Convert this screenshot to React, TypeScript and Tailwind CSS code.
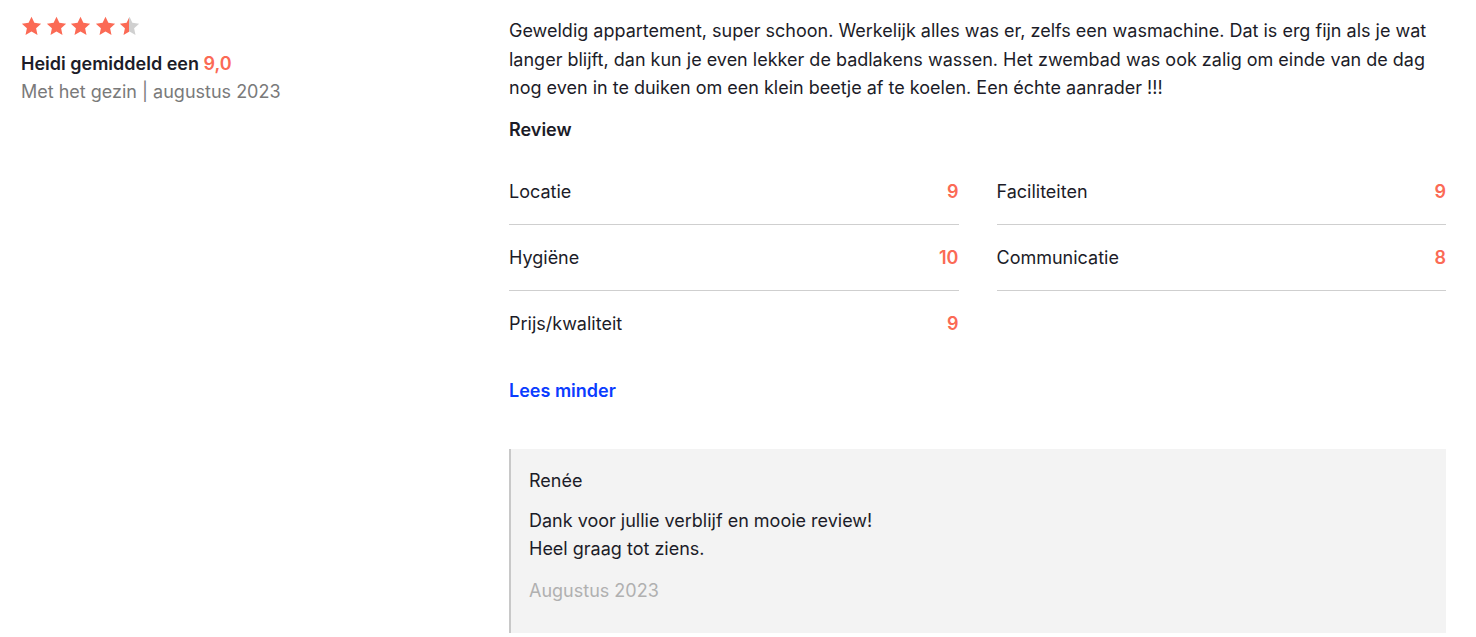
import React from 'react';

const SCORES = [
  { label: 'Locatie', value: 9 },
  { label: 'Faciliteiten', value: 9 },
  { label: 'Hygiëne', value: 10 },
  { label: 'Communicatie', value: 8 },
  { label: 'Prijs/kwaliteit', value: 9 },
];

const Star: React.FC<{ fill: number }> = ({ fill }) => {
  const id = `half-${fill}`;
  return (
    <svg className="w-[21px] h-[20px]" viewBox="0 0 24 23">
      <defs>
        <linearGradient id={id}>
          <stop offset={`${fill * 100}%`} stopColor="#fb6a55" />
          <stop offset={`${fill * 100}%`} stopColor="#d0d0d0" />
        </linearGradient>
      </defs>
      <path
        d="M12 0.8l3.3 7.1 7.8 0.9-5.8 5.3 1.6 7.7L12 17.9l-6.9 3.9 1.6-7.7L0.9 8.8l7.8-0.9z"
        fill={`url(#${id})`}
      />
    </svg>
  );
};

export default function App() {
  return (
    <div className="min-h-screen bg-white text-[#1c1c28] font-['Inter','Noto_Sans',sans-serif]">
      <div className="flex pl-[21px] pr-[30px] pt-[16px]">
        <div className="w-[488px] shrink-0">
          <div className="flex gap-[3.5px]">
            {[1, 1, 1, 1, 0.5].map((f, i) => (
              <Star key={i} fill={f} />
            ))}
          </div>
          <div className="mt-[16px] text-[18px] leading-[24px] font-semibold">
            Heidi gemiddeld een <span className="text-[#fb6a55]">9,0</span>
          </div>
          <div className="mt-[4px] text-[18px] leading-[24px] text-[#7a7a7a]">
            Met het gezin | augustus 2023
          </div>
        </div>

        <div className="flex-1">
          <p className="text-[18px] leading-[28.5px] mt-[1px]">
            Geweldig appartement, super schoon. Werkelijk alles was er, zelfs een wasmachine. Dat is erg fijn als je wat
            langer blijft, dan kun je even lekker de badlakens wassen. Het zwembad was ook zalig om einde van de dag
            nog even in te duiken om een klein beetje af te koelen. Een échte aanrader !!!
          </p>
          <h3 className="mt-[15px] text-[18px] leading-[24px] font-semibold">Review</h3>

          <div className="mt-[17px] grid grid-cols-2 gap-x-[38px]">
            {SCORES.map((s, i) => (
              <div
                key={s.label}
                className={`flex justify-between items-center h-[66px] text-[18px] ${i < 4 ? 'border-b border-[#cfcfcf]' : ''}`}
              >
                <span>{s.label}</span>
                <span className="text-[#fb6a55] font-semibold">{s.value}</span>
              </div>
            ))}
          </div>

          <a href="#" className="block mt-[22px] text-[18px] leading-[24px] font-semibold text-[#0a3cff]">
            Lees minder
          </a>

          <div className="mt-[46px] bg-[#f3f3f3] border-l-2 border-[#c8c8c8] pl-[18px] pt-[20px] pb-[30px]">
            <div className="text-[18px] leading-[24px]">Renée</div>
            <p className="mt-[14px] text-[18px] leading-[28px]">
              Dank voor jullie verblijf en mooie review!
              <br />
              Heel graag tot ziens.
            </p>
            <div className="mt-[16px] text-[18px] leading-[24px] text-[#b0b0b0]">Augustus 2023</div>
          </div>
        </div>
      </div>
    </div>
  );
}
